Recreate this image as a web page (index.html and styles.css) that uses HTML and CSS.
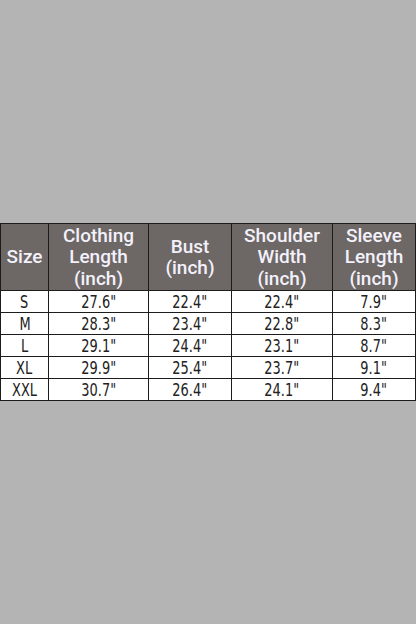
FILE: index.html
```html
<!DOCTYPE html>
<html>
<head>
<meta charset="utf-8">
<link rel="stylesheet" href="styles.css">
</head>
<body>
<main class="page">
  <table class="sizes">
    <colgroup>
      <col class="c1"><col class="c2"><col class="c3"><col class="c4"><col class="c5">
    </colgroup>
    <thead>
      <tr>
        <th>Size</th>
        <th>Clothing<br>Length<br>(inch)</th>
        <th>Bust<br>(inch)</th>
        <th>Shoulder<br>Width<br>(inch)</th>
        <th>Sleeve<br>Length<br>(inch)</th>
      </tr>
    </thead>
    <tbody>
      <tr><td><span class="v">S</span></td><td><span class="v">27.6"</span></td><td><span class="v">22.4"</span></td><td><span class="v">22.4"</span></td><td><span class="v">7.9"</span></td></tr>
      <tr><td><span class="v">M</span></td><td><span class="v">28.3"</span></td><td><span class="v">23.4"</span></td><td><span class="v">22.8"</span></td><td><span class="v">8.3"</span></td></tr>
      <tr><td><span class="v">L</span></td><td><span class="v">29.1"</span></td><td><span class="v">24.4"</span></td><td><span class="v">23.1"</span></td><td><span class="v">8.7"</span></td></tr>
      <tr><td><span class="v">XL</span></td><td><span class="v">29.9"</span></td><td><span class="v">25.4"</span></td><td><span class="v">23.7"</span></td><td><span class="v">9.1"</span></td></tr>
      <tr><td><span class="v">XXL</span></td><td><span class="v">30.7"</span></td><td><span class="v">26.4"</span></td><td><span class="v">24.1"</span></td><td><span class="v">9.4"</span></td></tr>
    </tbody>
  </table>
</main>
</body>
</html>
```

FILE: styles.css
```css
html, body {
  margin: 0;
  padding: 0;
  background: #b4b4b4;
}
.page {
  height: 624px;
  display: flex;
  align-items: center;
  justify-content: flex-start;
}
.sizes {
  border-collapse: collapse;
  table-layout: fixed;
  width: 415px;
  background: #ffffff;
}
.c1 { width: 48px; }
.c2 { width: 100px; }
.c3 { width: 83px; }
.c4 { width: 101px; }
.c5 { width: 83px; }
.sizes th, .sizes td {
  border: 1px solid #1c1c1c;
  text-align: center;
  padding: 0;
}
.sizes th {
  background: #6d6765;
  color: #f3f1fb;
  font-family: Roboto, "DejaVu Sans Condensed", sans-serif;
  font-weight: 500;
  font-size: 19px;
  line-height: 21.5px;
  height: 66px;
}
.sizes td {
  color: #222222;
  font-family: "DejaVu Sans Condensed", "DejaVu Sans", sans-serif;
  font-size: 18px;
  height: 21px;
  line-height: 21px;
}
.v {
  display: inline-block;
  transform: scaleX(0.8);
  transform-origin: center;
}
```
